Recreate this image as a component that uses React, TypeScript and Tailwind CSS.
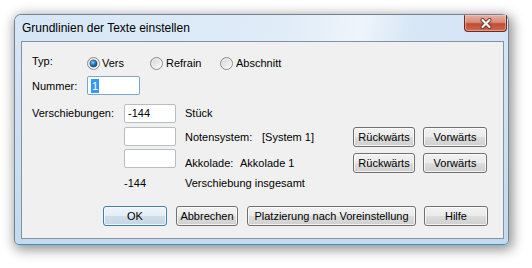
import React from "react";

const font = { fontFamily: '"Liberation Sans", Arial, sans-serif' };

function Radio({ checked }: { checked?: boolean }) {
  return (
    <svg width="13" height="13" viewBox="0 0 13 13" className="shrink-0">
      <defs>
        <linearGradient id="rb" x1="0" y1="0" x2="1" y2="1">
          <stop offset="0" stopColor="#cfcfcf" />
          <stop offset="1" stopColor="#ffffff" />
        </linearGradient>
        <radialGradient id="dot" cx="0.4" cy="0.35" r="0.7">
          <stop offset="0" stopColor="#8fd3ff" />
          <stop offset="0.45" stopColor="#2a83c8" />
          <stop offset="1" stopColor="#0d3a66" />
        </radialGradient>
      </defs>
      <circle cx="6.5" cy="6.5" r="6" fill="url(#rb)" stroke="#8a8a8a" strokeWidth="1" />
      <circle cx="6.5" cy="6.5" r="4.6" fill="none" stroke="#f4f4f4" strokeWidth="0.8" />
      {checked && <circle cx="6.5" cy="6.5" r="3.6" fill="url(#dot)" stroke="#1b4a78" strokeWidth="0.6" />}
    </svg>
  );
}

function Btn({ w, label, primary }: { w: string; label: string; primary?: boolean }) {
  return (
    <div
      className={`${w} h-[20px] shrink-0 rounded-[3px] border flex items-center justify-center text-[11px] leading-[13px] text-black ${
        primary
          ? "border-[#3c7fb1] bg-[linear-gradient(#eef5fa_0%,#e2edf5_50%,#cfdde8_51%,#c6d6e3_100%)]"
          : "border-[#707070] bg-[linear-gradient(#f2f2f2_0%,#ebebeb_50%,#dddddd_51%,#cfcfcf_100%)]"
      } shadow-[inset_0_0_0_1px_rgba(255,255,255,0.75)]`}
    >
      {label}
    </div>
  );
}

function Field({ children }: { children?: React.ReactNode }) {
  return (
    <div className="w-[52px] h-[19px] shrink-0 bg-white border border-[#b9bcc1] rounded-[2px] flex items-center pl-[3px] text-[11px] leading-[13px]">
      {children}
    </div>
  );
}

export default function App() {
  return (
    <div className="w-[532px] h-[268px] bg-white pl-[14px] pt-[14px]" style={font}>
      <div className="w-[495px] h-[231px] rounded-t-[7px] rounded-b-[5px] border border-[#73828f] border-b-[#3a8fc4] bg-[linear-gradient(#dae8f6,#cfe1f3_40%,#c4daef)] shadow-[2px_3px_12px_2px_rgba(0,0,0,0.42)] flex flex-col">
        {/* title bar */}
        <div className="h-[26px] flex justify-between bg-[linear-gradient(100deg,#d6e6f6_0%,#e0ecf8_55%,#eef4fb_70%,#d8e7f6_80%,#d3e4f5_100%)] rounded-t-[6px]">
          <div className="pl-[7px] self-center text-[12px] leading-[14px] text-black">Grundlinien der Texte einstellen</div>
          <div className="mr-[1px] w-[43px] h-[17px] rounded-b-[4px] rounded-t-[1px] border border-[#6b2a1e] border-t-0 bg-[linear-gradient(#e7b0a2_0%,#d98e7b_45%,#c24c33_55%,#cc6a4f_100%)] shadow-[inset_0_0_0_1px_rgba(255,210,200,0.5)] flex items-center justify-center">
            <svg width="14" height="11" viewBox="0 0 14 11">
              <path d="M3.5 2 L10.5 9 M10.5 2 L3.5 9" stroke="#6a3a30" strokeWidth="4" strokeLinecap="round" />
              <path d="M3.5 2 L10.5 9 M10.5 2 L3.5 9" stroke="#f4f4f4" strokeWidth="2.2" strokeLinecap="round" />
            </svg>
          </div>
        </div>

        {/* client area */}
        <div className="ml-[6px] mr-[4px] mb-[5px] flex-1 border border-[#8391a0] bg-[#f0f0f0] pl-[10px] text-[11px] leading-[13px] text-black flex flex-col">
          {/* Typ */}
          <div className="mt-[15px] h-[13px] flex items-center">
            <div className="w-[55px] -mt-[5px]">Typ:</div>
            <div className="w-[63px] flex items-center gap-[2px]">
              <Radio checked />
              <span>Vers</span>
            </div>
            <div className="w-[70px] flex items-center gap-[3px]">
              <Radio />
              <span>Refrain</span>
            </div>
            <div className="flex items-center gap-[3px]">
              <Radio />
              <span>Abschnitt</span>
            </div>
          </div>

          {/* Nummer */}
          <div className="mt-[6px] h-[19px] flex items-center">
            <div className="w-[55px] mt-[2px]">Nummer:</div>
            <div className="w-[53px] h-[19px] bg-white border border-[#7fa3cc] rounded-[2px] flex items-center pl-[3px]">
              <span className="bg-[#3399ff] text-white px-[1px] leading-[14px]">1</span>
            </div>
          </div>

          {/* Verschiebungen */}
          <div className="mt-[9px] h-[19px] flex items-center">
            <div className="w-[92px]">Verschiebungen:</div>
            <Field>-144</Field>
            <div className="ml-[9px]">Stück</div>
          </div>

          {/* Notensystem */}
          <div className="mt-[4px] h-[20px] flex items-start">
            <div className="w-[92px]" />
            <Field />
            <div className="ml-[9px] w-[168px] h-[20px] flex items-center">
              <span className="w-[77px]">Notensystem:</span>
              <span>[System 1]</span>
            </div>
            <Btn w="w-[62px]" label="Rückwärts" />
            <div className="w-[8px]" />
            <Btn w="w-[64px]" label="Vorwärts" />
          </div>

          {/* Akkolade */}
          <div className="mt-[2px] h-[24px] flex items-start">
            <div className="w-[92px]" />
            <Field />
            <div className="ml-[9px] mt-[4px] flex items-center">
              <div className="w-[168px] h-[20px] flex items-center">
                <span className="w-[55px]">Akkolade:</span>
                <span>Akkolade 1</span>
              </div>
              <Btn w="w-[62px]" label="Rückwärts" />
              <div className="w-[8px]" />
              <Btn w="w-[64px]" label="Vorwärts" />
            </div>
          </div>

          {/* insgesamt */}
          <div className="mt-[3px] h-[14px] flex items-center">
            <div className="w-[92px]" />
            <div className="w-[61px]">-144</div>
            <div>Verschiebung insgesamt</div>
          </div>

          {/* bottom buttons */}
          <div className="mt-[16px] ml-[71px] flex">
            <Btn w="w-[64px]" label="OK" primary />
            <div className="w-[9px]" />
            <Btn w="w-[62px]" label="Abbrechen" />
            <div className="w-[9px]" />
            <Btn w="w-[169px]" label="Platzierung nach Voreinstellung" />
            <div className="w-[8px]" />
            <Btn w="w-[64px]" label="Hilfe" />
          </div>
        </div>
      </div>
    </div>
  );
}
